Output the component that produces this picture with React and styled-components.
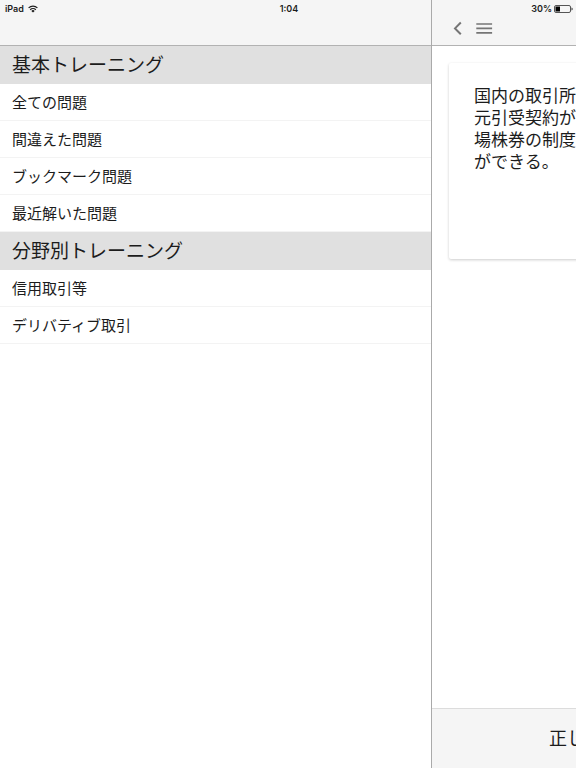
import React from 'react';
import styled, { createGlobalStyle } from 'styled-components';

const GlobalStyle = createGlobalStyle`
  * {
    box-sizing: border-box;
  }

  body {
    margin: 0;
    background-color: #fff;
    color: #1c1c1c;
    font-family: "Liberation Sans", "Noto Sans CJK JP", sans-serif;
  }
`;

const Screen = styled.div`
  position: relative;
  display: flex;
  min-height: 100vh;
  overflow: hidden;
`;

const StatusBar = styled.div`
  position: absolute;
  top: 0;
  left: 0;
  right: 0;
  display: grid;
  grid-template-columns: 1fr auto 1fr;
  align-items: center;
  height: 17px;
  padding: 0 3px 0 5px;
  font-family: Inter, sans-serif;
  font-size: 9px;
  font-weight: 600;
  line-height: 17px;
`;

const StatusGroup = styled.div`
  display: flex;
  align-items: center;
  justify-content: ${({ $end }) => ($end ? 'flex-end' : 'flex-start')};
  gap: ${({ $end }) => ($end ? '2px' : '4px')};
`;

const Drawer = styled.aside`
  flex: 0 0 75%;
  border-right: 1px solid #aaa;
`;

const Toolbar = styled.header`
  display: flex;
  align-items: flex-end;
  gap: 8px;
  height: 46px;
  padding: 0 16px 7px;
  background-color: #f5f5f5;
  border-bottom: 1px solid #b2b2b2;
`;

const SectionTitle = styled.h2`
  height: 38px;
  margin: 0;
  padding: 0 12px;
  background-color: #e0e0e0;
  font-size: 19px;
  font-weight: 400;
  line-height: 40px;
`;

const List = styled.ul`
  margin: 0;
  padding: 0;
  list-style: none;
`;

const ItemLink = styled.a`
  display: block;
  height: 37px;
  padding: 0 12px;
  border-bottom: 1px solid #f3f3f3;
  color: inherit;
  font-size: 15px;
  line-height: 37px;
  text-decoration: none;
`;

/* keeps its full width and slides off the right edge while the drawer is open */
const Page = styled.main`
  display: flex;
  flex: 0 0 100%;
  flex-direction: column;
`;

const IconButton = styled.button`
  display: flex;
  align-items: center;
  justify-content: center;
  height: 20px;
  padding: 0;
  border: none;
  background: none;
  color: #757575;
  cursor: pointer;
`;

const Content = styled.div`
  flex: 1;
  padding: 17px;
`;

const Card = styled.article`
  min-height: 196px;
  padding: 23px 25px;
  background-color: #fff;
  border-radius: 2px;
  box-shadow: 0 1px 3px rgba(0, 0, 0, 0.2);
`;

const Question = styled.p`
  margin: 0;
  font-size: 17px;
  line-height: 22px;
  white-space: pre-line;
`;

const Footer = styled.footer`
  display: flex;
  height: 60px;
  background-color: #f5f5f5;
  border-top: 1px solid #dcdcdc;
`;

const AnswerButton = styled.button`
  width: 50%;
  padding: 0 0 4px;
  border: none;
  background: none;
  color: inherit;
  font-family: inherit;
  font-size: 18px;
  cursor: pointer;
`;

const sections = [
  {
    title: '基本トレーニング',
    items: ['全ての問題', '間違えた問題', 'ブックマーク問題', '最近解いた問題'],
  },
  {
    title: '分野別トレーニング',
    items: ['信用取引等', 'デリバティブ取引'],
  },
];

const question = '国内の取引所\n元引受契約が\n場株券の制度\nができる。';

const WifiIcon = () => (
  <svg width="10" height="8" viewBox="0 0 10 8" fill="none" stroke="#1c1c1c" strokeWidth="1.2">
    <path d="M0.6 2.9a6.3 6.3 0 0 1 8.8 0M2.2 4.7a4 4 0 0 1 5.6 0" />
    <path d="M5 7.6L3.3 5.9a2.4 2.4 0 0 1 3.4 0z" fill="#1c1c1c" stroke="none" />
  </svg>
);

const BatteryIcon = () => (
  <svg width="19" height="8" viewBox="0 0 19 8" fill="none">
    <rect x="0.5" y="0.5" width="16" height="7" rx="1.5" stroke="#555" />
    <rect x="1.5" y="1.5" width="4.5" height="5" fill="#000" />
    <path d="M17.5 2.5q1.2 0.3 1.2 1.5t-1.2 1.5z" fill="#333" />
  </svg>
);

const BackIcon = () => (
  <svg width="19" height="20" viewBox="0 0 19 20" fill="none" stroke="currentColor" strokeWidth="2">
    <path d="M12.8 4.5L7 10.4l5.8 5.9" />
  </svg>
);

const MenuIcon = () => (
  <svg width="18" height="20" viewBox="0 0 18 20" fill="none" stroke="currentColor" strokeWidth="1.7">
    <path d="M1.3 6h15.8M1.3 10.4h15.8M1.3 14.8h15.8" />
  </svg>
);

const App = () => {
  return (
    <>
      <GlobalStyle />
      <Screen>
        <Drawer>
          <Toolbar />
          <nav>
            {sections.map(({ title, items }) => (
              <section key={title}>
                <SectionTitle>{title}</SectionTitle>
                <List>
                  {items.map(item => (
                    <li key={item}>
                      <ItemLink href="#">{item}</ItemLink>
                    </li>
                  ))}
                </List>
              </section>
            ))}
          </nav>
        </Drawer>
        <Page>
          <Toolbar>
            <IconButton type="button" aria-label="戻る">
              <BackIcon />
            </IconButton>
            <IconButton type="button" aria-label="メニュー">
              <MenuIcon />
            </IconButton>
          </Toolbar>
          <Content>
            <Card>
              <Question>{question}</Question>
            </Card>
          </Content>
          <Footer>
            <AnswerButton type="button">正しい</AnswerButton>
          </Footer>
        </Page>
        <StatusBar>
          <StatusGroup>
            <span>iPad</span>
            <WifiIcon />
          </StatusGroup>
          <span>1:04</span>
          <StatusGroup $end>
            <span>30%</span>
            <BatteryIcon />
          </StatusGroup>
        </StatusBar>
      </Screen>
    </>
  );
};

export default App;
